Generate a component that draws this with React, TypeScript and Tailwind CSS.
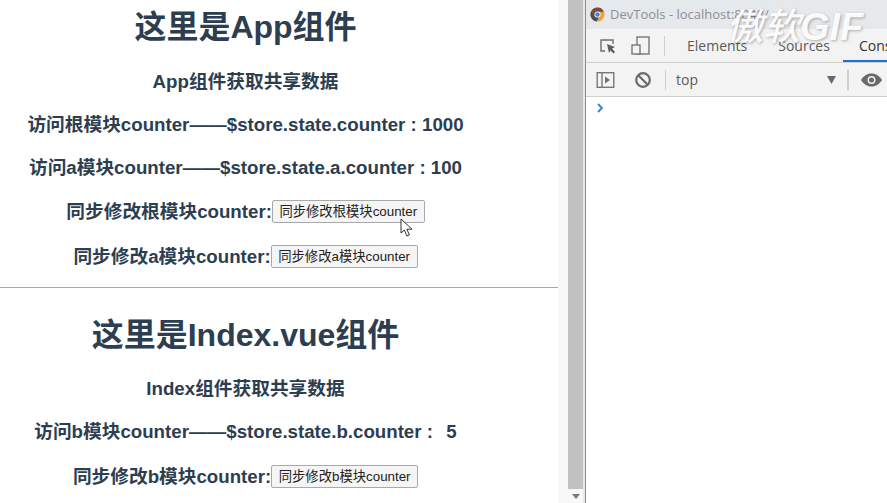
import React from "react";

const font = { fontFamily: '"Liberation Sans", "Noto Sans CJK SC", sans-serif' };

function Row({ label, btn, cls }: { label: string; btn: string; cls: string }) {
  return (
    <div className={`flex items-center justify-center font-bold text-[18.7px] leading-[22px] ${cls}`}>
      <span>{label}</span>
      <button className="h-[23px] px-[6.5px] bg-[#f5f5f5] border border-[#a9a9a9] rounded-[2px] text-[13.33px] font-normal text-[#222] leading-none">{btn}</button>
    </div>
  );
}

export default function App() {
  return (
    <div className="w-[887px] h-[503px] flex overflow-hidden bg-white relative" style={font}>
      <div className="w-[558px] h-full shrink-0 text-[#2c3e50]">
        <div className="pr-[67px] text-center">
          <h1 className="text-[32px] font-bold leading-[37px] pt-[9px]">这里是App组件</h1>
          <p className="font-bold text-[18.7px] leading-[22px] mt-[25px]">App组件获取共享数据</p>
          <p className="font-bold text-[18.7px] leading-[22px] mt-[21px]">访问根模块counter——$store.state.counter : 1000</p>
          <p className="font-bold text-[18.7px] leading-[22px] mt-[21px]">访问a模块counter——$store.state.a.counter : 100</p>
          <Row label="同步修改根模块counter:" btn="同步修改根模块counter" cls="mt-[21px]" />
          <Row label="同步修改a模块counter:" btn="同步修改a模块counter" cls="mt-[22px]" />
        </div>
        <hr className="border-0 h-px bg-[#a8a8a8] mt-[19px]" />
        <div className="pr-[67px] text-center">
          <h1 className="text-[32px] font-bold leading-[37px] mt-[29px]">这里是Index.vue组件</h1>
          <p className="font-bold text-[18.7px] leading-[22px] mt-[24px]">Index组件获取共享数据</p>
          <p className="font-bold text-[18.7px] leading-[22px] mt-[21px]">访问b模块counter——$store.state.b.counter :&nbsp;&nbsp;<span className="ml-[3px]">5</span></p>
          <Row label="同步修改b模块counter:" btn="同步修改b模块counter" cls="mt-[22px]" />
        </div>
      </div>

      <div className="w-[10px] bg-[#f8f8f8] shrink-0" />
      <div className="w-[15px] shrink-0 flex flex-col bg-[#f8f8f8]">
        <div className="flex-1 bg-[#c1c1c1]" />
        <div className="h-[14px] flex items-center justify-center">
          <svg width="8" height="5" viewBox="0 0 8 5"><path d="M0 0h8L4 5z" fill="#7a7a7a" /></svg>
        </div>
      </div>
      <div className="w-[2px] bg-[#e8e8e8] shrink-0" />
      <div className="w-px bg-[#8d8d8d] shrink-0" />

      <div className="flex-1 flex flex-col min-w-0 text-[#5a5a5a]" style={{ fontFamily: '"Open Sans", "Noto Sans", sans-serif' }}>
        <div className="h-[29px] bg-[#e6e9ec] flex items-center pl-[4px] gap-[5px] text-[13px] text-[#8b8f93]">
          <svg className="shrink-0" width="15" height="15" viewBox="0 0 16 16">
            <circle cx="8" cy="8" r="7.5" fill="#e8a33d" />
            <path d="M8 .5A7.5 7.5 0 0 0 1.6 4L4.5 9 8 5h6.8A7.5 7.5 0 0 0 8 .5z" fill="#7a4a3a" />
            <path d="M1.6 4A7.5 7.5 0 0 0 7 15.4L9.5 11H6z" fill="#4a4f55" />
            <circle cx="8" cy="8" r="3.2" fill="#fff" />
            <circle cx="8" cy="8" r="2.4" fill="#3f86d6" />
          </svg>
          <span className="whitespace-nowrap">DevTools - localhost:8848/</span>
        </div>
        <div className="h-[34px] bg-[#f3f3f3] border-b border-[#cfcfcf] flex items-center text-[14px] whitespace-nowrap relative overflow-hidden">
          <svg className="ml-[13px] shrink-0" width="18" height="18" viewBox="0 0 18 18" fill="none">
            <path d="M6 14H2V3h12v4" stroke="#6e6e6e" strokeWidth="1.4" />
            <path d="M8 7l8 3-3 1.600L16 15l-1.500 1.500-3-3L10 16z" fill="#5f5f5f" />
          </svg>
          <svg className="ml-[14px] shrink-0" width="19" height="19" viewBox="0 0 19 19" fill="none">
            <rect x="6" y="1" width="12" height="17" stroke="#6e6e6e" strokeWidth="1.3" />
            <rect x="1" y="9" width="8" height="9" fill="#f3f3f3" stroke="#6e6e6e" strokeWidth="1.3" />
          </svg>
          <div className="w-px h-[20px] bg-[#cfcfcf] ml-[14px] shrink-0" />
          <span className="ml-[22px] shrink-0">Elements</span>
          <span className="ml-[31px] shrink-0">Sources</span>
          <span className="ml-[29px] shrink-0 text-[#333]">Console</span>
          <div className="absolute bottom-0 left-[257px] w-[50px] h-[2px] bg-[#1a73d0]" />
        </div>
        <div className="h-[34px] bg-[#f3f3f3] border-b border-[#d0d0d0] flex items-center text-[14px] whitespace-nowrap">
          <svg className="ml-[10px] shrink-0" width="19" height="16" viewBox="0 0 18 16" fill="none">
            <rect x="0.7" y="0.7" width="16.600" height="14.600" stroke="#6e6e6e" strokeWidth="1.3" />
            <path d="M5.500 1v14" stroke="#6e6e6e" strokeWidth="1.3" />
            <path d="M8.500 4.500l5 3.500-5 3.500z" fill="#6e6e6e" />
          </svg>
          <svg className="ml-[19px] shrink-0" width="18" height="18" viewBox="0 0 18 18" fill="none">
            <circle cx="9" cy="9" r="6.800" stroke="#6a6a6a" strokeWidth="2.2" />
            <path d="M4.500 4.500l9 9" stroke="#6a6a6a" strokeWidth="2.2" />
          </svg>
          <div className="w-px h-[20px] bg-[#cfcfcf] ml-[13px] shrink-0" />
          <span className="ml-[10px] w-[151px] shrink-0">top</span>
          <svg className="shrink-0" width="9" height="8" viewBox="0 0 9 8"><path d="M0 0h9L4.500 8z" fill="#6a6a6a" /></svg>
          <div className="w-[2px] h-[20px] bg-[#cfcfcf] ml-[11px] shrink-0" />
          <svg className="ml-[12px] shrink-0" width="21" height="14" viewBox="0 0 21 14">
            <path d="M0 7c2.500-4 6-6.500 10.500-6.500S18.500 3 21 7c-2.500 4-6 6.500-10.500 6.500S2.500 11 0 7z" fill="#6a6a6a" />
            <circle cx="10.500" cy="7" r="4" fill="#f3f3f3" />
            <circle cx="10.500" cy="7" r="2.500" fill="#6a6a6a" />
          </svg>
        </div>
        <div className="flex-1 bg-white pl-[11px] pt-[6px]">
          <svg width="7" height="10" viewBox="0 0 7 10" fill="none"><path d="M1 1l4 4-4 4" stroke="#2d84d2" strokeWidth="1.8" /></svg>
        </div>
      </div>

      <svg className="absolute left-[400px] top-[218px]" width="14" height="19" viewBox="0 0 14 19">
        <path d="M1 1v14l3.400-3 2.400 6 2.600-1-2.500-5.800H12z" fill="#fff" stroke="#333" strokeWidth="1" />
      </svg>
      <span className="absolute left-[726px] top-[2px] leading-[44px] italic text-white/95 whitespace-nowrap [text-shadow:1px_1px_3px_rgba(0,0,0,0.3)]" style={{ fontFamily: '"Noto Sans CJK SC", "Liberation Sans", sans-serif' }}>
        <span className="font-medium text-[37px]">傲软</span><span className="font-bold text-[38px]" style={{ fontFamily: '"Liberation Sans", sans-serif' }}>GIF</span>
      </span>
    </div>
  );
}
